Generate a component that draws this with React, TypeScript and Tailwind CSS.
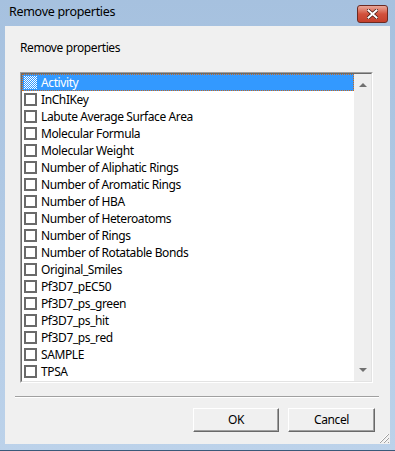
const items = [
  "Activity",
  "InChIKey",
  "Labute Average Surface Area",
  "Molecular Formula",
  "Molecular Weight",
  "Number of Aliphatic Rings",
  "Number of Aromatic Rings",
  "Number of HBA",
  "Number of Heteroatoms",
  "Number of Rings",
  "Number of Rotatable Bonds",
  "Original_Smiles",
  "Pf3D7_pEC50",
  "Pf3D7_ps_green",
  "Pf3D7_ps_hit",
  "Pf3D7_ps_red",
  "SAMPLE",
  "TPSA",
];

function Row({ label, selected }: { label: string; selected: boolean }) {
  return (
    <div
      className={
        selected
          ? "flex h-[17px] items-center bg-[#3399ff] text-white outline-1 outline-dotted -outline-offset-1 outline-[#c86a1e]"
          : "flex h-[17px] items-center text-black"
      }
    >
      <div
        className={
          selected
            ? "ml-[2px] h-[13px] w-[13px] shrink-0 bg-[repeating-conic-gradient(#3399ff_0_25%,#ffffff_0_50%)] bg-[length:2px_2px]"
            : "ml-[2px] h-[13px] w-[13px] shrink-0 border-2 border-[#6a6a6a] bg-white"
        }
      />
      <span className="ml-[4px] whitespace-nowrap leading-[17px]">{label}</span>
    </div>
  );
}

function ScrollBar() {
  return (
    <div className="flex w-[17px] flex-col items-center justify-between bg-[#eeeeee] py-[9px]">
      <div className="h-0 w-0 border-x-[4px] border-b-[4px] border-x-transparent border-b-[#707070]" />
      <div className="h-0 w-0 border-x-[4px] border-t-[4px] border-x-transparent border-t-[#707070]" />
    </div>
  );
}

export default function App() {
  return (
    <div
      className="relative flex h-[451px] w-[395px] flex-col bg-gradient-to-b from-[#a6c1df] to-[#bcd2ea] text-[12px]"
      style={{ fontFamily: '"Noto Sans", "Open Sans", sans-serif' }}
    >
      {/* title bar */}
      <div className="relative flex h-[26px] items-center pl-[9px] pb-[1px] text-[12.5px] tracking-[-0.3px] text-black">
        <span>Remove properties</span>
        <div className="absolute right-[7px] top-[5px] flex h-[18px] w-[31px] items-center justify-center rounded-[3px] border border-[#6b2a22] bg-gradient-to-b from-[#e8a799] via-[#d2513c] to-[#c4402c]">
          <svg width="11" height="10" viewBox="0 0 11 10">
            <path d="M1.5 1.5 L9.5 8.5 M9.5 1.5 L1.5 8.5" stroke="#4a1a14" strokeWidth="3.6" strokeLinecap="square" />
            <path d="M1.5 1.5 L9.5 8.5 M9.5 1.5 L1.5 8.5" stroke="#ffffff" strokeWidth="2" strokeLinecap="square" />
          </svg>
        </div>
      </div>

      {/* client area */}
      <div className="relative mx-[5px] flex h-[418px] flex-col bg-[#f0f0f0] tracking-[-0.4px]">
        <div className="ml-[15px] mt-[14px] h-[16px] leading-[16px] text-black">Remove properties</div>

        <div className="ml-[15px] mt-[16px] h-[311px] w-[353px] border-l border-t border-b border-r border-l-[#a0a0a0] border-t-[#a0a0a0] border-b-white border-r-white">
          <div className="flex h-full w-full border-l border-t border-b border-r border-l-[#696969] border-t-[#696969] border-b-[#e3e3e3] border-r-[#e3e3e3]">
            <div className="flex-1 bg-white">
              {items.map((it, i) => (
                <Row key={it} label={it} selected={i === 0} />
              ))}
            </div>
            <ScrollBar />
          </div>
        </div>

        <div className="ml-[10px] mt-[13px] h-[2px] w-[364px] border-t border-b border-t-[#a0a0a0] border-b-white" />

        <div className="ml-[188px] mt-[10px] flex gap-[9px]">
          <button className="h-[24px] w-[86px] border border-t-white border-l-white border-b-[#696969] border-r-[#696969] bg-[#f0f0f0] text-black shadow-[inset_-1px_-1px_0_#a0a0a0]">
            OK
          </button>
          <button className="h-[24px] w-[87px] border border-t-white border-l-white border-b-[#696969] border-r-[#696969] bg-[#f0f0f0] text-black shadow-[inset_-1px_-1px_0_#a0a0a0]">
            Cancel
          </button>
        </div>

        {/* size grip */}
        <svg className="absolute bottom-[1px] right-[1px]" width="12" height="12" viewBox="0 0 12 12">
          <path d="M11 3 L3 11 M11 7 L7 11 M11 11 L11 11" stroke="#ffffff" strokeWidth="1" />
          <path d="M12 3 L3 12 M12 7 L7 12 M12 11 L11 12" stroke="#a0a0a0" strokeWidth="1" />
        </svg>
      </div>

      <div className="mt-auto h-[1px] w-full bg-[#3a5a7a]" />
    </div>
  );
}
